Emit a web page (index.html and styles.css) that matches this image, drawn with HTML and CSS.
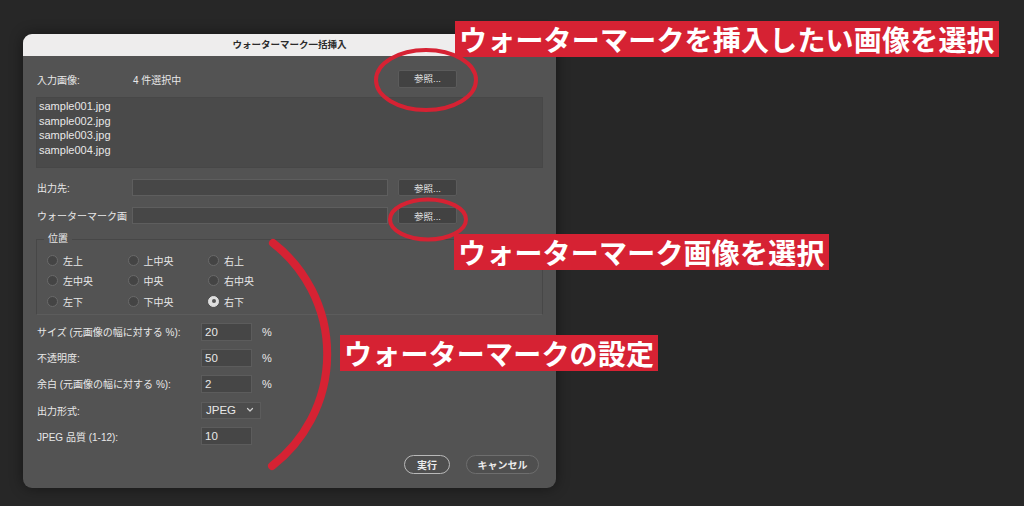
FILE: index.html
```html
<!DOCTYPE html>
<html lang="ja">
<head>
  <meta charset="UTF-8">
  <title>ウォーターマーク一括挿入</title>
  <link rel="stylesheet" href="styles.css">
</head>
<body>
  <div class="dialog">
    <div class="titlebar">ウォーターマーク一括挿入</div>

    <div class="content">
      <div class="file-row first">
        <span class="label">入力画像:</span>
        <span class="count">4 件選択中</span>
        <button class="browse">参照...</button>
      </div>

      <div class="file-list">
        <div>sample001.jpg</div>
        <div>sample002.jpg</div>
        <div>sample003.jpg</div>
        <div>sample004.jpg</div>
      </div>

      <div class="file-row">
        <span class="label">出力先:</span>
        <span class="field"></span>
        <button class="browse">参照...</button>
      </div>
      <div class="file-row">
        <span class="label">ウォーターマーク画</span>
        <span class="field"></span>
        <button class="browse">参照...</button>
      </div>

      <fieldset class="position">
        <legend>位置</legend>
        <div class="radios">
          <label class="radio"><span class="dot"></span>左上</label>
          <label class="radio"><span class="dot"></span>上中央</label>
          <label class="radio"><span class="dot"></span>右上</label>
          <label class="radio"><span class="dot"></span>左中央</label>
          <label class="radio"><span class="dot"></span>中央</label>
          <label class="radio"><span class="dot"></span>右中央</label>
          <label class="radio"><span class="dot"></span>左下</label>
          <label class="radio"><span class="dot"></span>下中央</label>
          <label class="radio"><span class="dot on"></span>右下</label>
        </div>
      </fieldset>

      <div class="settings">
        <span class="label">サイズ (元画像の幅に対する %):</span>
        <span class="num">20</span>
        <span class="unit">%</span>

        <span class="label">不透明度:</span>
        <span class="num">50</span>
        <span class="unit">%</span>

        <span class="label">余白 (元画像の幅に対する %):</span>
        <span class="num">2</span>
        <span class="unit">%</span>

        <span class="label">出力形式:</span>
        <span class="select">JPEG
          <svg width="8" height="6" viewBox="0 0 8 6" fill="none" stroke="#cfcfcf" stroke-width="1.2" stroke-linecap="round" stroke-linejoin="round">
            <polyline points="1.5,1.5 4,4 6.5,1.5"></polyline>
          </svg>
        </span>
        <span class="unit"></span>

        <span class="label">JPEG 品質 (1-12):</span>
        <span class="num">10</span>
        <span class="unit"></span>
      </div>

      <div class="actions">
        <button class="pill default">実行</button>
        <button class="pill">キャンセル</button>
      </div>
    </div>
  </div>

  <!-- annotations drawn over the screenshot -->
  <svg class="marks" width="1024" height="506" viewBox="0 0 1024 506" fill="none" stroke="#d62233">
    <ellipse cx="426" cy="80" rx="50" ry="30" stroke-width="4"></ellipse>
    <ellipse cx="428" cy="219.5" rx="38" ry="20" stroke-width="4"></ellipse>
    <path d="M273 243 A141 141 0 0 1 272 466" stroke-width="8" stroke-linecap="round"></path>
  </svg>
  <div class="note note-input">ウォーターマークを挿入したい画像を選択</div>
  <div class="note note-mark">ウォーターマーク画像を選択</div>
  <div class="note note-settings">ウォーターマークの設定</div>
</body>
</html>
```

FILE: styles.css
```css
body {
  margin: 0;
  width: 1024px;
  height: 506px;
  overflow: hidden;
  position: relative;
  background: #272727;
  font-family: "Liberation Sans", "Noto Sans CJK JP", sans-serif;
  font-size: 10px;
  color: #e8e8e8;
}
.dialog {
  margin: 34px 0 0 23px;
  width: 533px;
  height: 454px;
  background: #535353;
  border-radius: 9px;
  overflow: hidden;
  box-shadow: 0 0 14px rgba(0,0,0,0.45);
}
.titlebar {
  height: 22px;
  line-height: 22px;
  background: #eeeded;
  color: #2b2b2b;
  text-align: center;
  font-weight: 600;
  font-size: 9.5px;
}
.content {
  padding: 0 13px;
}
.file-row {
  display: grid;
  grid-template-columns: 85px 256px 59px;
  column-gap: 10px;
  align-items: center;
  height: 17px;
  padding-left: 1px;
  margin-top: 11px;
}
.file-row.first {
  margin-top: 14px;
  height: 18px;
}
.label {
  white-space: nowrap;
}
.count {
  padding-left: 1px;
}
.field {
  height: 17px;
  box-sizing: border-box;
  background: #474747;
  border: 1px solid #5e5e5e;
}
.browse {
  height: 17px;
  line-height: 15px;
  padding: 0;
  font: inherit;
  font-size: 9.5px;
  color: #e6e6e6;
  background: #424242;
  border: 1px solid #5b5b5b;
  border-radius: 2px;
}
.first .browse {
  height: 18px;
  line-height: 16px;
}
.file-list {
  margin-top: 9px;
  height: 71px;
  box-sizing: border-box;
  padding: 1px 2px;
  background: #4a4a4a;
  border: 1px solid #474747;
  font-size: 11px;
  line-height: 14.6px;
}
.position {
  margin: 8px 0 0;
  padding: 4px 0 2px 7px;
  border: 1px solid #474747;
  border-bottom-color: #5c5c5c;
}
.position legend {
  padding: 0 4px;
  line-height: 14px;
}
.radios {
  display: grid;
  grid-template-columns: repeat(3, 80.5px);
  grid-auto-rows: 20.5px;
  padding-left: 3px;
}
.radio {
  display: flex;
  align-items: center;
  gap: 5px;
}
.dot {
  width: 11px;
  height: 11px;
  box-sizing: border-box;
  border-radius: 50%;
  background: #444;
  border: 1px solid #6a6a6a;
  display: flex;
  align-items: center;
  justify-content: center;
}
.dot.on {
  background: #dedede;
  border-color: #dedede;
}
.dot.on::after {
  content: "";
  width: 4px;
  height: 4px;
  border-radius: 50%;
  background: #555;
}
.settings {
  margin-top: 8px;
  padding-left: 1px;
  display: grid;
  grid-template-columns: 164px 51px 30px;
  grid-auto-rows: 18px;
  row-gap: 8.2px;
  align-items: center;
}
.num, .select {
  height: 18px;
  box-sizing: border-box;
  background: #464646;
  border: 1px solid #5c5c5c;
  padding-left: 3px;
  line-height: 16px;
  font-size: 11.5px;
}
.select {
  width: 60px;
  height: 17px;
  background: #4c4c4c;
  display: flex;
  align-items: center;
  justify-content: space-between;
  padding: 0 6px 0 4px;
}
.unit {
  padding-left: 10px;
  font-size: 11px;
}
.actions {
  margin-top: 10px;
  padding-right: 4px;
  display: flex;
  justify-content: flex-end;
  gap: 16px;
}
.pill {
  height: 19px;
  padding: 0;
  font: inherit;
  font-weight: 700;
  font-size: 10px;
  color: #ececec;
  background: #4f4f4f;
  border: 1px solid #6e6e6e;
  border-radius: 10px;
  width: 73px;
}
.pill.default {
  width: 46px;
  border: 1.5px solid #b9b9b9;
}
.marks {
  position: absolute;
  left: 0;
  top: 0;
}
.note {
  position: absolute;
  background: #d62233;
  color: #fff;
  font-family: "Noto Sans CJK JP", sans-serif;
  font-weight: 700;
  font-size: 28px;
  height: 36px;
  line-height: 36px;
  padding: 0 4px;
  white-space: nowrap;
  letter-spacing: 0.2px;
}
.note-input {
  left: 455px;
  top: 21px;
}
.note-mark {
  left: 454px;
  top: 234px;
}
.note-settings {
  left: 340px;
  top: 335px;
}
```
